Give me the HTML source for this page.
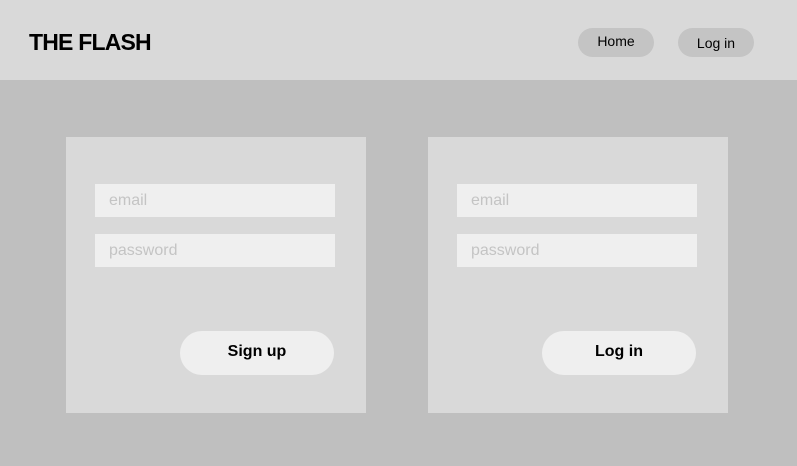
<!DOCTYPE html><html><head><style>
body{margin:0;width:797px;height:466px;background:#bfbfbf;font-family:"Liberation Sans",sans-serif;position:relative;overflow:hidden}
.hdr{position:absolute;left:0;top:0;width:797px;height:80px;background:#d9d9d9}
.logo{position:absolute;left:29px;top:29px;font-size:23px;font-weight:bold;color:#000;letter-spacing:-0.8px}
.pill{position:absolute;top:28px;height:29px;width:76px;border-radius:15px;background:#c4c4c4;font-size:14px;text-align:center;line-height:29px;color:#000}
.card{position:absolute;top:137px;width:300px;height:276px;background:#d9d9d9}
.in{position:absolute;left:29px;width:240px;height:33px;background:#efefef;color:#c4c4c4;font-size:16px;line-height:33px;text-indent:14px}
.btn{position:absolute;left:114px;top:194px;width:154px;height:44px;border-radius:22px;background:#efefef;font-size:16px;font-weight:bold;text-align:center;line-height:42px;color:#000}
</style></head><body>
<div class="hdr"><div class="logo">THE FLASH</div>
<div class="pill" style="left:578px;line-height:27px">Home</div>
<div class="pill" style="left:678px;line-height:31px">Log in</div></div>
<div class="card" style="left:66px"><div class="in" style="top:47px">email</div><div class="in" style="top:97px">password</div><div class="btn">Sign up</div></div>
<div class="card" style="left:428px"><div class="in" style="top:47px">email</div><div class="in" style="top:97px">password</div><div class="btn">Log in</div></div>
</body></html>
